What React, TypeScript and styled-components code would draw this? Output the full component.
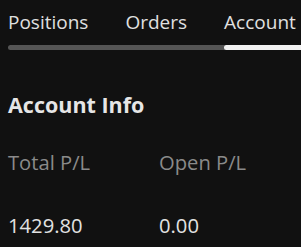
import React from "react";
import styled, { createGlobalStyle } from "styled-components";

const Global = createGlobalStyle`
  html, body { margin: 0; padding: 0; background: #111111; }
  body { font-family: "Open Sans", "Noto Sans", sans-serif; }
`;

const Page = styled.div`
  width: 301px;
  height: 247px;
  overflow: hidden;
  background: #111111;
  color: #e2e2e2;
`;

const TabBar = styled.div`
  padding: 9px 0 0 8px;
`;

const TabRow = styled.div`
  display: flex;
  gap: 37px;
  white-space: nowrap;
`;

const Tab = styled.div<{ $active?: boolean }>`
  font-size: 19px;
  line-height: 26px;
  color: #e0e0e0;
`;

const Track = styled.div`
  margin-top: 10px;
  height: 5px;
  display: flex;
  border-radius: 3px 0 0 3px;
  background: #555555;
  overflow: hidden;
`;

const Indicator = styled.div<{ $left: number }>`
  margin-left: ${(p) => p.$left}px;
  flex: 1;
  background: #f2f2f2;
  border-radius: 3px 0 0 3px;
`;

const Section = styled.div`
  padding: 0 8px;
`;

const Title = styled.div`
  margin-top: 41px;
  font-size: 21.5px;
  font-weight: 700;
  line-height: 28px;
  color: #e6e6e6;
`;

const Grid = styled.div`
  margin-top: 30px;
  display: grid;
  grid-template-columns: 151px 1fr;
  row-gap: 37px;
  font-size: 20.2px;
  line-height: 26px;
`;

const Label = styled.div`
  color: #8a8a8a;
`;

const Value = styled.div`
  color: #e2e2e2;
`;

export default function App() {
  return (
    <Page>
      <Global />
      <TabBar>
        <TabRow>
          <Tab>Positions</Tab>
          <Tab>Orders</Tab>
          <Tab $active>Account</Tab>
        </TabRow>
        <Track>
          <Indicator $left={216} />
        </Track>
      </TabBar>
      <Section>
        <Title>Account Info</Title>
        <Grid>
          <Label>Total P/L</Label>
          <Label>Open P/L</Label>
          <Value>1429.80</Value>
          <Value>0.00</Value>
        </Grid>
      </Section>
    </Page>
  );
}
